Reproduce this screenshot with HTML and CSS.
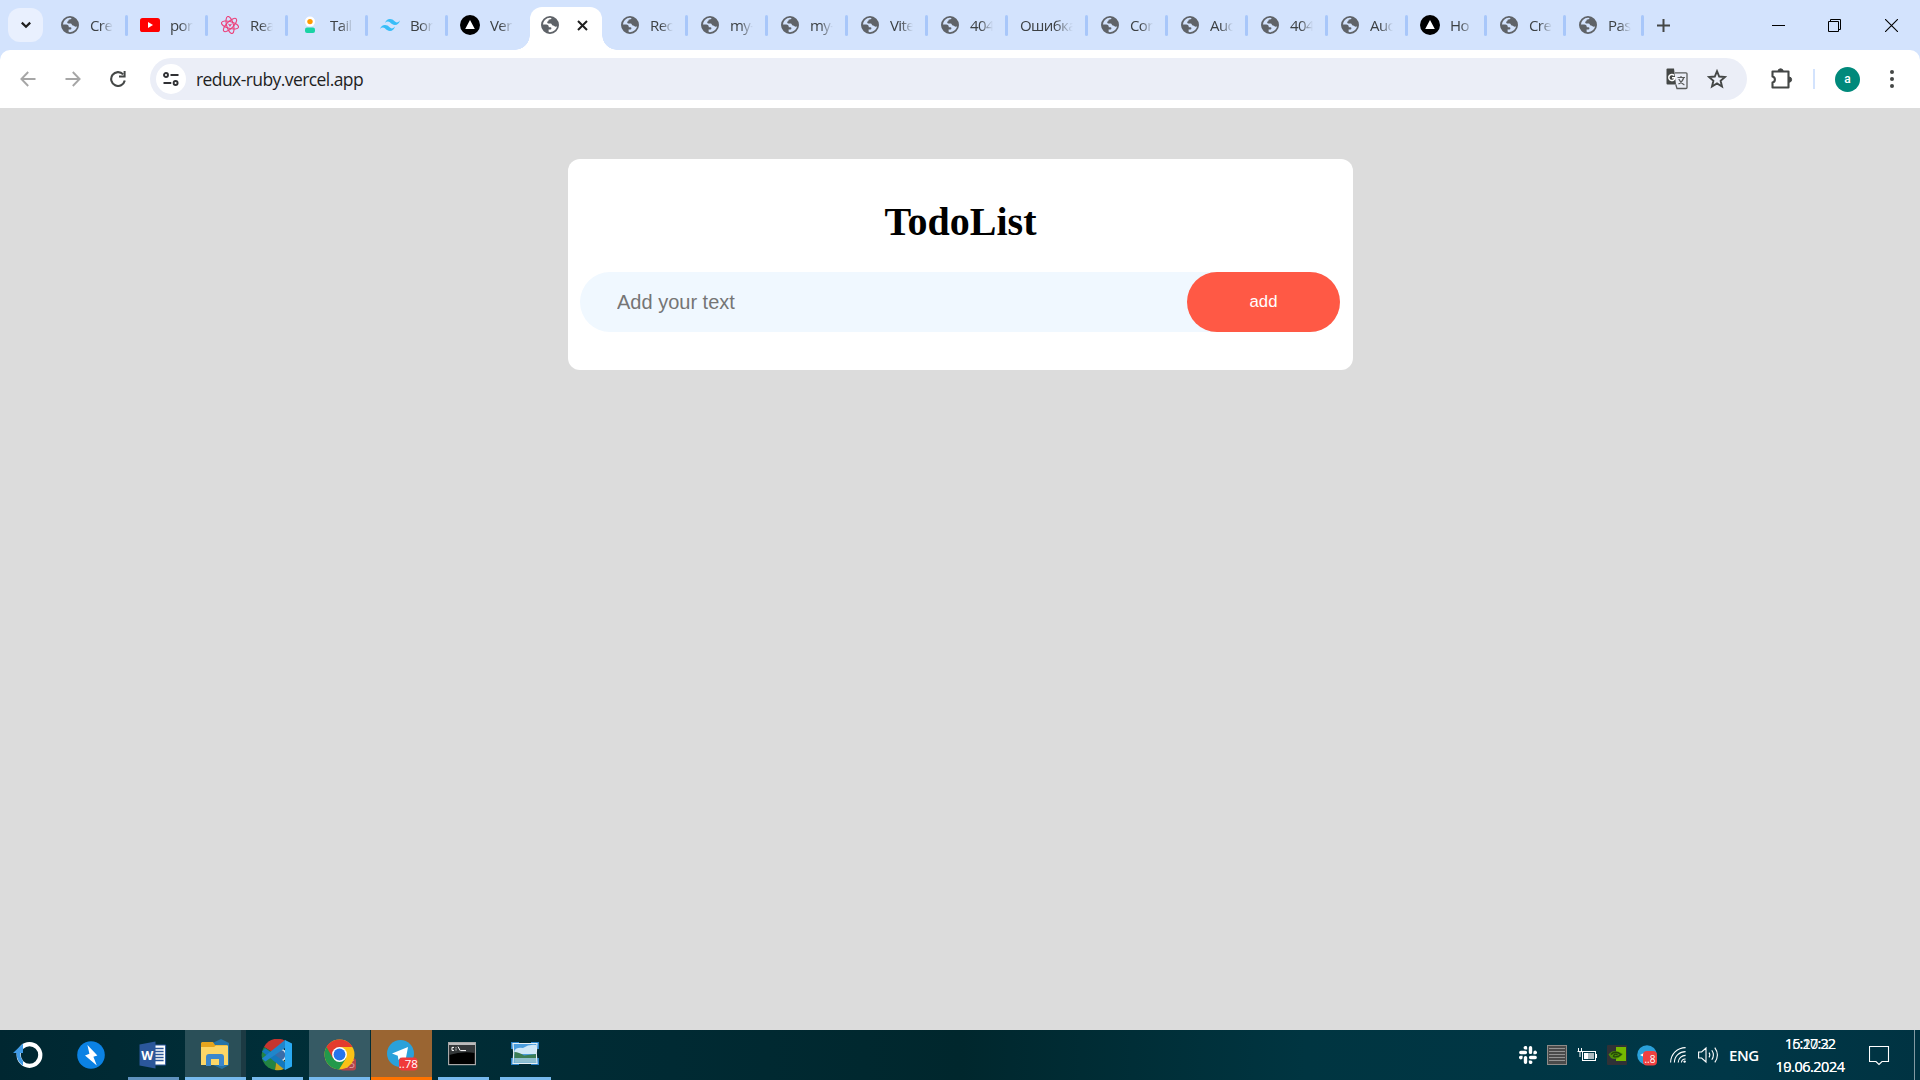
FILE: index.html
```html
<!DOCTYPE html>
<html lang="en">
<head>
<meta charset="utf-8">
<title>TodoList</title>
<link rel="stylesheet" href="styles.css">
</head>
<body>
<svg class="defs" width="0" height="0">
  <symbol id="globe" viewBox="0 0 18 18">
    <circle cx="9" cy="9" r="8.1" fill="none" stroke="#5f6368" stroke-width="1.8"/>
    <path d="M10.6 1.4C10.8 2.8 9.4 3.6 8 3.6C7.4 3.8 7.8 5.4 6.6 5.6C5.8 5.8 6.2 7.4 7 7.4H9.6C11 7.4 10.6 9.6 12 9.6C13.2 9.6 13.4 10.8 14.6 10.8L17 10.2A8 8 0 0 0 10.6 1.4Z" fill="#5f6368"/>
    <path d="M1 8.4H5.2C7 8.4 7.8 9.4 7.8 11.2H9.4C10.8 11.2 10.8 13.6 9.2 13.6H7.6V16.9A8 8 0 0 1 1 8.4Z" fill="#5f6368"/>
  </symbol>
  <symbol id="vercel" viewBox="0 0 20 20">
    <circle cx="10" cy="10" r="10" fill="#000"/>
    <path d="M10 5L14.8 14H5.2Z" fill="#fff"/>
  </symbol>
  <symbol id="slack-arm" viewBox="0 0 18 18">
    <path d="M5.2 .6A1.7 1.7 0 0 1 8.2 1.8V3.6H6.4A1.7 1.7 0 0 1 5.2 .6ZM1.8 4.8H6.4A1.6 1.6 0 0 1 6.4 8.2H1.8A1.6 1.6 0 0 1 1.8 4.8Z" fill="#fff"/>
  </symbol>
</svg>

<header class="browser">
  <div class="tabstrip">
    <button class="tab-search"><svg width="12" height="8" viewBox="0 0 12 8"><path d="M1.8 1.6L6 5.8L10.2 1.6" fill="none" stroke="#1f1f1f" stroke-width="2.2"/></svg></button>
    <nav class="tabs">
      <div class="tab"><svg class="fav"><use href="#globe"/></svg><span>Cre</span></div>
      <div class="tab"><svg class="fav big" viewBox="0 0 20 20"><rect y="3" width="20" height="14" rx="2.6" fill="#f00"/><path d="M8 7L13 10L8 13Z" fill="#fff"/></svg><span>por</span></div>
      <div class="tab"><svg class="fav" viewBox="0 0 18 18"><g fill="none" stroke="#ec407a" stroke-width="1.1"><ellipse cx="9" cy="9" rx="8.8" ry="3.4" transform="rotate(15 9 9)"/><ellipse cx="9" cy="9" rx="8.8" ry="3.4" transform="rotate(75 9 9)"/><ellipse cx="9" cy="9" rx="8.8" ry="3.4" transform="rotate(135 9 9)"/></g><path d="M6.8 7.4L9 11L11.2 7.4L9 8.6Z" fill="#ec407a"/></svg><span>Rea</span></div>
      <div class="tab"><svg class="fav" viewBox="0 0 18 18"><circle cx="9" cy="5.6" r="5" fill="#fff"/><circle cx="9" cy="5.6" r="2.7" fill="#ff9900"/><rect x="4" y="11.6" width="10" height="5.4" rx="2" fill="#1ad3a5"/></svg><span>Tail</span></div>
      <div class="tab"><svg class="fav big" viewBox="0 0 20 20"><path d="M5 8Q6.4 4 10 4C14 4 14.4 7.4 17 7.4Q18.8 7.4 20 5.6Q18.6 10 15 10C11 10 10.4 6.6 8 6.6Q6.2 6.6 5 8ZM0 14Q1.4 10 5 10C9 10 9.4 13.4 12 13.4Q13.8 13.4 15 11.6Q13.6 16 10 16C6 16 5.4 12.6 3 12.6Q1.2 12.6 0 14Z" fill="#38bdf8"/></svg><span>Bor</span></div>
      <div class="tab plain"><svg class="fav big"><use href="#vercel"/></svg><span>Ver</span></div>
      <div class="tab active"><svg class="fav"><use href="#globe"/></svg><svg class="close" width="11" height="11" viewBox="0 0 11 11"><path d="M1 1L10 10M10 1L1 10" stroke="#1f1f1f" stroke-width="2"/></svg></div>
      <div class="tab"><svg class="fav"><use href="#globe"/></svg><span>Rec</span></div>
      <div class="tab"><svg class="fav"><use href="#globe"/></svg><span>my-</span></div>
      <div class="tab"><svg class="fav"><use href="#globe"/></svg><span>my-</span></div>
      <div class="tab"><svg class="fav"><use href="#globe"/></svg><span>Vite</span></div>
      <div class="tab"><svg class="fav"><use href="#globe"/></svg><span>404</span></div>
      <div class="tab noicon"><span>Ошибка</span></div>
      <div class="tab"><svg class="fav"><use href="#globe"/></svg><span>Cor</span></div>
      <div class="tab"><svg class="fav"><use href="#globe"/></svg><span>Auc</span></div>
      <div class="tab"><svg class="fav"><use href="#globe"/></svg><span>404</span></div>
      <div class="tab"><svg class="fav"><use href="#globe"/></svg><span>Auc</span></div>
      <div class="tab narrow"><svg class="fav big"><use href="#vercel"/></svg><span>Ho</span></div>
      <div class="tab narrow"><svg class="fav"><use href="#globe"/></svg><span>Cre</span></div>
      <div class="tab narrower"><svg class="fav"><use href="#globe"/></svg><span>Pas</span></div>
    </nav>
    <svg class="new-tab" width="13" height="13" viewBox="0 0 13 13"><path d="M6.5 0V13M0 6.5H13" stroke="#444746" stroke-width="2"/></svg>
    <div class="window-buttons">
      <svg width="13" height="13" viewBox="0 0 13 13"><path d="M0 6.5H13" stroke="#000"/></svg>
      <svg width="13" height="13" viewBox="0 0 13 13"><path d="M.5 2.5H10.5V12.5H.5ZM2.5 2.5V.5H12.5V10.5H10.5" fill="none" stroke="#000"/></svg>
      <svg width="13" height="13" viewBox="0 0 13 13"><path d="M0 0L13 13M13 0L0 13" stroke="#000" stroke-width="1.1"/></svg>
    </div>
  </div>
  <div class="toolbar">
    <div class="nav-buttons">
      <svg width="16" height="16" viewBox="0 0 16 16"><path d="M15.5 8H1.6M8.2 1L1.4 8L8.2 15" fill="none" stroke="#a6a6a6" stroke-width="1.9"/></svg>
      <svg width="16" height="16" viewBox="0 0 16 16"><path d="M.5 8H14.4M7.8 1L14.6 8L7.8 15" fill="none" stroke="#a6a6a6" stroke-width="1.9"/></svg>
      <svg width="16" height="16" viewBox="0 0 16 16"><path d="M13.2 3.4A6.9 6.9 0 1 0 14.8 9.6" fill="none" stroke="#444746" stroke-width="2.1"/><path d="M15.6 0V6.6H9V4.6H13.6V0Z" fill="#444746"/></svg>
    </div>
    <div class="omnibox">
      <span class="site-info"><svg width="16" height="14" viewBox="0 0 16 14"><g fill="none" stroke="#303134" stroke-width="1.9"><circle cx="3" cy="3" r="2"/><path d="M7.5 3H15.5M.5 11H8.3"/><circle cx="12.6" cy="11" r="2"/></g></svg></span>
      <span class="url">redux-ruby.vercel.app</span>
      <svg class="translate" width="22" height="22" viewBox="0 0 22 22"><path d="M1.5 .5H8L10 16.5H1.5Q.5 16.5 .5 15.5V1.5Q.5 .5 1.5 .5Z" fill="#444746"/><path d="M9 4.8H20Q21 4.8 21 5.8V19.5Q21 20.5 20 20.5H11L9.8 16.5" fill="none" stroke="#5a5c5c" stroke-width="1.3"/><path d="M8.2 7.4A3.1 3.1 0 1 0 9 9.8H6" fill="none" stroke="#fff" stroke-width="1.5"/><path d="M11.5 9.5H19M15 8V9.5M17.8 9.5Q16.5 14 12.5 16M12.8 11Q14.4 15 18.4 17" fill="none" stroke="#5a5c5c" stroke-width="1.2"/></svg>
      <svg class="star" width="20" height="20" viewBox="0 0 20 20"><path d="M10 2.2L12.2 7.5L18 8L13.6 11.8L15 17.5L10 14.4L5 17.5L6.4 11.8L2 8L7.8 7.5Z" fill="none" stroke="#444746" stroke-width="1.9"/></svg>
    </div>
    <svg class="ext" width="22" height="22" viewBox="0 0 22 22"><path d="M1.5 3.5H17.5V19.5H1.5V14.6A3.2 3.2 0 0 0 1.5 8.4Z" fill="none" stroke="#444746" stroke-width="2.1" stroke-linejoin="round"/><path d="M7 3.4A2.6 2.6 0 0 1 12.2 3.4ZM18 9A2.6 2.6 0 0 1 18 14.2Z" fill="#444746" stroke="#444746"/></svg>
    <i class="divider"></i>
    <span class="avatar">a</span>
    <svg class="menu" width="4" height="18" viewBox="0 0 4 18"><g fill="#444746"><circle cx="2" cy="2" r="2"/><circle cx="2" cy="9" r="2"/><circle cx="2" cy="16" r="2"/></g></svg>
  </div>
</header>

<main class="page">
  <section class="todo">
    <h1>TodoList</h1>
    <form class="todo-form">
      <input type="text" placeholder="Add your text">
      <button type="button">add</button>
    </form>
  </section>
</main>

<footer class="taskbar">
  <div class="apps">
    <div class="app start"><svg width="30" height="28" viewBox="0 0 30 28"><circle cx="16.5" cy="14" r="10.8" fill="none" stroke="#fff" stroke-width="4.2"/><path d="M10 2.6L0 12H3.4Q3.6 20.4 10 24.8V20Q6.8 16 7.4 12H10Z" fill="#3f9be8"/></svg></div>
    <div class="app bolt"><svg width="28" height="28" viewBox="0 0 28 28"><circle cx="14" cy="14" r="13.8" fill="#0b82e4"/><path d="M10.4 4L20.4 14.6L16.4 15.8L19.8 24.4L8 14.4L12.4 12.8Z" fill="#fff"/></svg></div>
    <div class="app word"><svg width="28" height="28" viewBox="0 0 28 28"><path d="M14 4H26.6V24H14Z" fill="#fff" stroke="#2b579a"/><path d="M16 7.5H24.6M16 10.5H24.6M16 13.5H24.6M16 16.5H24.6M16 19.5H24.6" stroke="#2b579a" stroke-width="1.3"/><path d="M.5 3.4L16.5 .6V27.4L.5 24.6Z" fill="#2b579a"/><text x="8.4" y="18.6" text-anchor="middle" font-size="12.5" font-weight="700" fill="#fff">W</text></svg></div>
    <div class="app explorer"><svg width="32" height="32" viewBox="0 0 32 32"><path d="M3 10L22 1L30 5V27L23 31L3 22Z" fill="#2573a7"/><path d="M3 4H14L16 7H28V26H2V5Z" fill="#e5a51f"/><path d="M2 9H15L17 7.5H29V27H2Z" fill="#fcd667"/><path d="M7 28V19Q7 16 10 16H22Q25 16 25 19V28H20V21H12V28Z" fill="#3c87cc"/></svg></div>
    <div class="app code"><svg width="32" height="32" viewBox="0 0 32 32"><path d="M16 16L3 8A15 15 0 0 1 27 4Z" fill="#c5352f"/><path d="M16 16L3 8A15 15 0 0 0 14 31Z" fill="#238442"/><path d="M16 16L14 31A15 15 0 0 0 28 26Z" fill="#c6a51d"/><circle cx="19" cy="16" r="6" fill="#3a6ca8" stroke="#d0e0ec" stroke-width="1.6"/><path d="M24 31L1 12.4L4.4 9.4L24 23Z" fill="#1378bd"/><path d="M24 1V9L4.4 22.6L1 19.6Z" fill="#1f86cc"/><path d="M24 1L31 4.6V27.4L24 31Z" fill="#2aa9f2"/></svg></div>
    <div class="app chrome"><svg width="32" height="34" viewBox="0 0 32 34"><rect x="16" y="20" width="16" height="12.6" rx="3" fill="#b4444b"/><text x="24.8" y="30.2" text-anchor="middle" font-size="11" fill="#dca0a4">85</text><circle cx="15.5" cy="16.5" r="15" fill="#fbc116"/><path d="M15.5 16.5L22 20.3L15 31.5A15 15 0 0 1 2.5 9Z" fill="#22994b"/><path d="M15.5 16.5L9 20.3L2.5 9A15 15 0 0 1 28.5 9H15.5Z" fill="#e33b2e"/><circle cx="15.5" cy="16.5" r="7.4" fill="#fff"/><circle cx="15.5" cy="16.5" r="5.9" fill="#2474ec"/></svg></div>
    <div class="app telegram"><svg width="32" height="32" viewBox="0 0 32 32"><circle cx="14.5" cy="14.5" r="13.5" fill="#2aa1da"/><path d="M6 14.4L22 8L19.4 22L14.8 18.4L12.4 21L11.8 16.8Z" fill="#fff"/><rect x="13" y="18.5" width="18.5" height="13" rx="3.5" fill="#f03a3a"/><text x="22.3" y="29.2" text-anchor="middle" font-size="11.5" fill="#fff">..78</text></svg></div>
    <div class="app cmd"><svg width="28" height="24" viewBox="0 0 28 24"><rect x=".6" y=".6" width="26.8" height="22" fill="#000" stroke="#a8a8a8" stroke-width="1.2"/><path d="M1 1H27V11Q14 9 1 13Z" fill="#34383a"/><path d="M1 2H27" stroke="#ddd" stroke-width="1.6"/><path d="M6 5.4H4V8.4H6M8 5.4V6.4M8 7.4V8.4M10 4.6L12.2 8.6M12.4 8.6H18" fill="none" stroke="#fff"/></svg></div>
    <div class="app photo"><svg width="28" height="26" viewBox="0 0 28 26"><path d="M0 1H8V8H0ZM20 1H28V8H20ZM0 17H8V24H0ZM20 17H28V24H20Z" fill="#2b83c9"/><path d="M2 2.5H26Q24.5 12 26 22.5H2Q3.5 12 2 2.5Z" fill="#4a9ddd" stroke="#e6f0f4" stroke-width="1.2"/><path d="M3.4 10Q5 6 12 7Q18 3 25 4V13H3.4Z" fill="#cfe8f8"/><path d="M3.4 11Q8 11 13 14.6L25 13V17H3.4Z" fill="#3c7d55"/><path d="M3.4 17H25V21.8H3.4Z" fill="#8fbfd0"/></svg></div>
  </div>
  <div class="tray">
    <svg class="slack" width="18" height="18" viewBox="0 0 18 18"><use href="#slack-arm"/><use href="#slack-arm" transform="rotate(90 9 9)"/><use href="#slack-arm" transform="rotate(180 9 9)"/><use href="#slack-arm" transform="rotate(270 9 9)"/></svg>
    <svg class="memory" width="20" height="20" viewBox="0 0 20 20"><rect x=".5" y=".5" width="19" height="19" fill="#4a4a4a" stroke="#8e8b88"/><path d="M2 3.5H18M2 6.5H18M2 9.5H18M2 12.5H18M2 15.5H18" stroke="#939393"/></svg>
    <svg width="20" height="14" viewBox="0 0 20 14"><path d="M1.5 0V3M4.5 0V3M.5 3.5H5.5M3 4V9" fill="none" stroke="#fff"/><rect x="5.5" y="3.5" width="13" height="9" fill="none" stroke="#fff"/><rect x="7" y="5" width="4" height="6" fill="#fff"/><rect x="11" y="5" width="6" height="6" fill="#aebbc0"/><path d="M19.4 6V10" stroke="#fff" stroke-width="1.2"/></svg>
    <svg width="20" height="20" viewBox="0 0 20 20"><rect width="20" height="20" rx="1" fill="#303136"/><path d="M9 2H19V16H9Z" fill="#76b900"/><path d="M1.5 9.5Q7 3 16 9Q10 16 4 13Z" fill="#4d8d08"/><path d="M4 9.5Q8 5 14 9.5Q10 13 6.5 11.5Q7 8 10.5 9.8" fill="none" stroke="#254708" stroke-width="1.3"/></svg>
    <svg width="20" height="21" viewBox="0 0 20 21"><circle cx="10" cy="10" r="9.8" fill="#2aa1da"/><path d="M3 10L9 7V13Z" fill="#fff"/><rect x="6" y="6" width="14" height="14.5" rx="4" fill="#f04040"/><text x="12.9" y="17.6" text-anchor="middle" font-size="10" fill="#fff">..8</text></svg>
    <svg class="wifi" width="16" height="16" viewBox="0 0 16 16"><g fill="none" stroke="#fff" stroke-width="1.1"><path d="M.6 15.5A15 15 0 0 1 15.6 .6M4.4 15.5A11 11 0 0 1 15.6 4.6M8.2 15.5A7.4 7.4 0 0 1 15.6 8.4M11.4 15.5A4 4 0 0 1 15.6 12"/></g><circle cx="14.6" cy="14.6" r="1.2" fill="#fff"/></svg>
    <svg class="sound" width="21" height="18" viewBox="0 0 21 18"><g fill="none" stroke="#fff" stroke-width="1.1"><path d="M.6 6V12H3.6L8 16V2L3.6 6ZM11 6.6Q12.6 9 11 11.4M13.8 4.2Q17 9 13.8 13.8M16.8 1.6Q22 9 16.8 16.4"/></g></svg>
    <span class="lang">ENG</span>
    <div class="clock">
      <div class="stack"><span>16:20:32</span><span>15:17:22</span></div>
      <div class="stack date"><span>10.06.2024</span><span>19.06.2024</span></div>
    </div>
    <svg class="notice" width="21" height="21" viewBox="0 0 21 21"><path d="M.5 1.5H19.5V16.5H13L10 19.5L7 16.5H.5Z" fill="none" stroke="#fff" stroke-width="1.1"/></svg>
    <i class="desktop-edge"></i>
  </div>
</footer>
</body>
</html>
```
FILE: styles.css
```css
* { box-sizing: border-box; }
html, body { height: 100%; margin: 0; }
body {
  display: flex;
  flex-direction: column;
  overflow: hidden;
  background: #dcdcdc;
  font-family: "Open Sans", "Noto Sans", sans-serif;
}
svg { display: block; flex: none; }
button { border: 0; padding: 0; }
.defs { position: absolute; }

/* browser chrome */
.browser { flex: none; height: 109px; background: #d3e3fd; border-bottom: 1px solid #dcdcdc; }
.tabstrip { display: flex; align-items: center; height: 50px; }
.tab-search {
  display: flex; align-items: center; justify-content: center;
  width: 35px; height: 34px; margin: 0 5px 0 8px;
  border-radius: 12px; background: #e9f0fe;
}
.tabs { display: flex; height: 50px; }
.tab {
  display: flex; align-items: center; position: relative;
  width: 80px; padding-left: 13px; color: #3c4043;
  font-size: 15px; font-stretch: 92%; letter-spacing: -.6px; white-space: nowrap;
}
.tab::after {
  content: ""; position: absolute; right: 0; top: 15px;
  width: 3px; height: 21px; border-radius: 2px; background: #a8c7fa;
}
.tab span {
  width: 23px; margin-left: 11px; overflow: hidden;
  -webkit-mask-image: linear-gradient(90deg, #000 45%, transparent 100%);
  mask-image: linear-gradient(90deg, #000 45%, transparent 100%);
}
.tab.noicon { padding-left: 12px; }
.tab.noicon span { width: 53px; margin: 0; -webkit-mask-image: linear-gradient(90deg, #000 65%, transparent 100%); mask-image: linear-gradient(90deg, #000 65%, transparent 100%); }
.tab.plain::after { display: none; }
.tab.narrow { width: 79px; }
.tab.narrower { width: 78px; }
.fav { width: 18px; height: 18px; }
.fav.big { width: 20px; height: 20px; margin: 0 -1px; }
.tab.active {
  width: 72px; height: 43px; margin: 7px 6px 0 2px; padding: 0 0 7px 11px;
  border-radius: 12px 12px 0 0; background: #fff;
}
.tab.active::before, .tab.active::after {
  content: ""; display: block; position: absolute; top: auto; bottom: 0;
  width: 15px; height: 15px; border-radius: 0;
}
.tab.active::before { left: -15px; background: radial-gradient(circle at 0 0, transparent 14.5px, #fff 15px); }
.tab.active::after { right: -15px; background: radial-gradient(circle at 100% 0, transparent 14.5px, #fff 15px); }
.close { margin-left: 18px; }
.new-tab { margin-left: 13px; }
.window-buttons { display: flex; gap: 43.5px; margin-left: auto; padding-right: 22.5px; }

.toolbar {
  display: flex; align-items: center; height: 58px;
  border-radius: 10px 10px 0 0; background: #fff;
}
.nav-buttons { display: flex; gap: 29px; width: 150px; padding-left: 20px; }
.omnibox {
  display: flex; align-items: center;
  width: 1597px; height: 42px; padding-left: 6px;
  border-radius: 21px; background: #ebeef7;
}
.site-info {
  display: flex; align-items: center; justify-content: center;
  width: 30px; height: 30px; border-radius: 50%; background: #fff;
}
.url { margin-left: 10px; font-size: 17.5px; letter-spacing: -.58px; color: #1f1f1f; }
.translate { margin-left: auto; }
.star { margin: 0 20px 0 19px; }
.ext { margin-left: 24px; }
.divider { width: 2px; height: 20px; margin-left: 20px; background: #d3e3fd; }
.avatar {
  display: flex; align-items: center; justify-content: center;
  width: 25px; height: 25px; margin-left: 20px; border-radius: 50%;
  background: #00897b; color: #fff; font: 500 12px Roboto, sans-serif;
}
.menu { margin-left: 30px; }

/* page */
.page { flex: 1; padding-top: 50px; }
.todo {
  width: 785px; height: 211px; margin-left: 568px; padding: 12px;
  border-radius: 12px; background: #fff;
}
.todo h1 {
  height: 46px; margin: 28px 0 27px; text-align: center; color: #000;
  font: bold 40px/46px "Liberation Serif", serif;
}
.todo-form {
  display: flex; width: 760px; height: 60px;
  border-radius: 30px; background: #f0f8ff;
}
.todo-form input {
  flex: 1; min-width: 0; padding: 0 0 0 37px; border: 0; outline: 0;
  background: transparent; font: 20px "Liberation Sans", sans-serif;
}
.todo-form input::placeholder { color: #757575; }
.todo-form button {
  width: 153px; border-radius: 30px; background: #ff5945; color: #fff;
  font: 16.7px "Liberation Sans", sans-serif;
}

/* taskbar */
.taskbar {
  display: flex; justify-content: space-between; flex: none; height: 50px;
  background: linear-gradient(90deg, #002731 0, #002e38 14%, #002a33 35%, #00272d 50%, #003541 68%, #003747 90%, #003342 100%);
}
.apps, .tray { display: flex; align-items: center; }
.apps { gap: 6px; }
.app {
  display: flex; align-items: center; justify-content: center;
  width: 51px; height: 50px; border-bottom: 3px solid #76b9ed;
}
.app.start { width: 58px; border-color: transparent; padding: 3px 2px 0 0; }
.app.bolt { width: 54px; border-color: transparent; padding-top: 3px; }
.app.word { margin-left: 4px; padding: 3px 2px 0 0; border-color: #5f92be; }
.app.explorer { width: 61px; padding-right: 1px; background: linear-gradient(90deg, #2a4f58 56px, #1c3a43 56px); }
.app.code { padding: 3px 1px 0 0; }
.app.chrome { width: 61px; padding-top: 2px; background: #365a64; }
.app.telegram { width: 61px; margin-left: -5px; padding-top: 3px; background: #9a6532; border-color: #ff7300; }
.app.cmd { padding: 1px 3px 0 0; }
.app.photo { margin-left: 5px; padding-right: 2px; }
.tray { color: #fff; }
.slack { margin-right: 10px; }
.tray svg + svg { margin-right: 10px; }
.tray .wifi { margin: 0 12px 0 3px; }
.tray .sound { margin-right: 10px; }
.lang { width: 32px; font-size: 15px; font-weight: 600; letter-spacing: -.4px; }
.clock { width: 74px; margin: 0 0 1px 12px; font-size: 14.5px; font-weight: 500; letter-spacing: -.85px; }
.clock .date { letter-spacing: -.5px; }
.stack { display: grid; justify-content: center; line-height: 23px; }
.stack span { grid-area: 1 / 1; }
.tray .notice { margin: 0 24px 0 22px; }
.desktop-edge { width: 6px; height: 50px; border-left: 1px solid #829aa2; }
```
